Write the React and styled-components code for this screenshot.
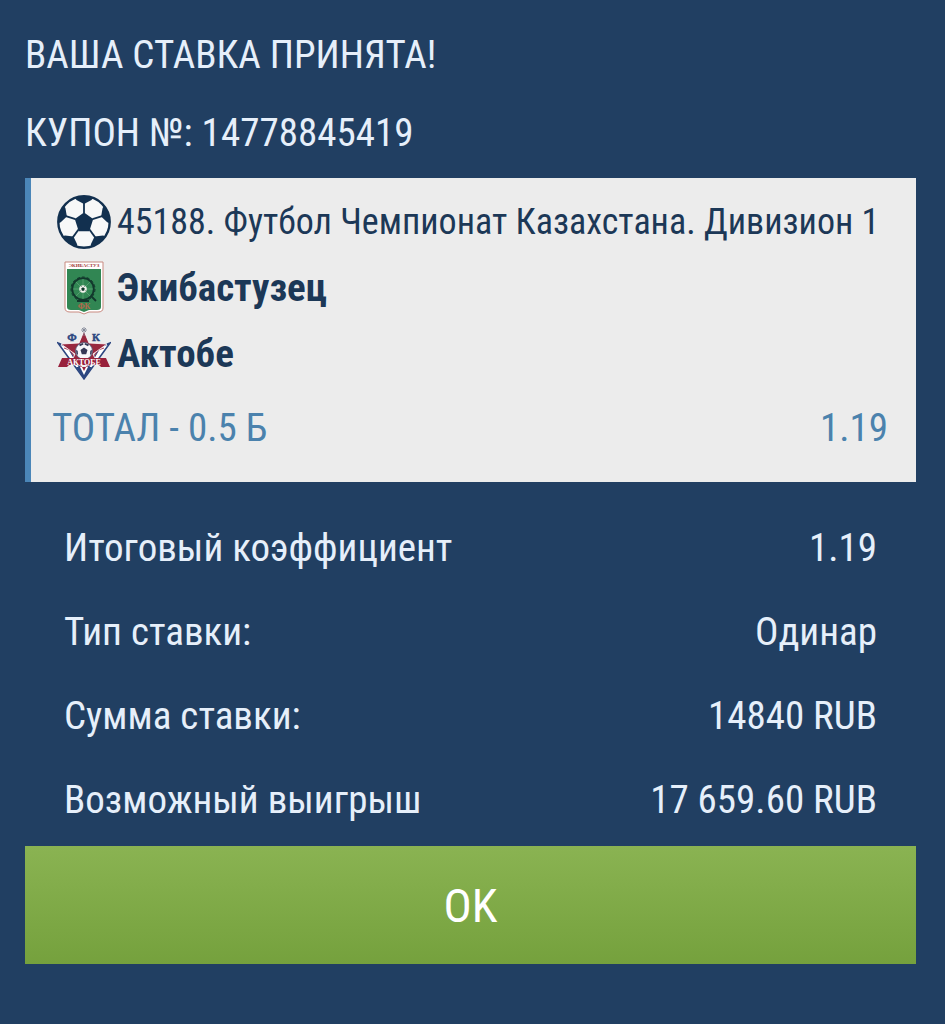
import React from 'react';
import styled, { createGlobalStyle } from 'styled-components';

const teams = [
  { name: 'Экибастузец', logo: 'ekibastuzets' },
  { name: 'Актобе', logo: 'aktobe' },
];

const summary = [
  { label: 'Итоговый коэффициент', value: '1.19' },
  { label: 'Тип ставки:', value: 'Одинар' },
  { label: 'Сумма ставки:', value: '14840 RUB' },
  { label: 'Возможный выигрыш', value: '17 659.60 RUB' },
];

const BallIcon = () => (
  <Icon viewBox="0 0 54 54" aria-hidden="true">
    <circle cx="27" cy="27" r="25.7" fill="#f7f8f8" stroke="#12304f" strokeWidth="2.4" />
    <path d="M27 17.5l9.2 6.600-3.500 10.800-.3 1.300H21.600l-.3-1.300-3.500-10.800z" fill="#12304f" />
    {[0, 72, 144, 216, 288].map((angle) => (
      <g key={angle} transform={`rotate(${angle} 27 27)`}>
        <path d="M27 18V8" stroke="#12304f" strokeWidth="1.8" />
        <path d="M18 3Q27 0 36 3l-1.500 2L27 9l-7.500-4z" fill="#12304f" />
      </g>
    ))}
  </Icon>
);

const EkibastuzetsLogo = () => (
  <Icon viewBox="0 0 54 54" aria-hidden="true">
    <path d="M8 1h38v46q0 4-5 4h-9l-5 2-5-2h-9q-5 0-5-4z" fill="#fff" stroke="#c98a80" />
    <path d="M10 8h34v38q0 3-4 3h-8l-5 2-5-2h-8q-4 0-4-3z" fill="#318653" />
    <ClubText x="27" y="6" fontSize="5" fill="#a33a36">ЭКИБАСТУЗ</ClubText>
    <path d="M26 17v22M15 28h22M19 21l14 14M33 21L19 35" stroke="#79b58b" strokeWidth=".5" />
    <circle cx="26" cy="28" r="10.8" fill="none" stroke="#12372c" strokeWidth="1.8" />
    <circle cx="26" cy="28" r="12" fill="none" stroke="#12372c" strokeWidth="1" strokeDasharray="3 2" />
    <path d="M20 40h12M34 35l5 5" stroke="#12372c" strokeWidth="1.8" />
    <circle cx="26" cy="28" r="3.8" fill="#f1f3ec" />
    <path d="M26 26.200l1.800 1.300-.7 2.200h-2.200l-.7-2.200zM23.300 25.500l1.200-.8.500.8zM28.700 25.500l-1.200-.8-.5.8zM22.500 29l1 .5.2 1.300zM29.500 29l-1 .5-.2 1.300z" fill="#12372c" />
    <ClubText x="27" y="48" fontSize="8" fill="#b5674b">ФК</ClubText>
  </Icon>
);

const AktobeLogo = () => (
  <Icon viewBox="0 0 54 54" aria-hidden="true">
    <path d="M1 16l10 4 16 28 16-28 10-4-26 36z" fill="#fff" stroke="#2c4680" strokeWidth="1.6" />
    <path d="M7 21l6 2 14 21 14-21 6-2" fill="none" stroke="#b04a5e" strokeWidth="1.2" />
    <path d="M27 4l5 12 18 1-14 10 5 11H13l5-11L4 17l18-1z" fill="#98283f" stroke="#fff" strokeWidth=".8" />
    <path d="M27 0v9M24 3h6M25 1l4 4M29 1l-4 4" stroke="#818796" strokeWidth=".9" />
    <circle cx="27" cy="24" r="8.500" fill="#f6f6fa" stroke="#4b506f" strokeWidth=".8" />
    <path d="M27 20.500l3.500 2.600-1.300 4.200h-4.400l-1.300-4.200zM22 17.500l4-1.500.5 1.500-3.500 1.700zM32 17.500L28 16l-.5 1.500 3.500 1.700zM19 23l1.700.8.3 4-1.500-.5zM35 23l-1.700.8-.3 4 1.500-.5z" fill="#343857" />
    <path d="M5 31h44l4 9h-9l-2-2H12l-2 2H1z" fill="#98213c" />
    <ClubText x="27" y="38" fontSize="8" fill="#fff">АКТОБЕ</ClubText>
    <ClubText x="15" y="14" fontSize="11" fill="#2c4680" stroke="#2c4680" strokeWidth=".4">Ф</ClubText>
    <ClubText x="39" y="14" fontSize="11" fill="#2c4680" stroke="#2c4680" strokeWidth=".4">К</ClubText>
    <path d="M19 40h16l-8 12z" fill="#2c4680" />
    <path d="M23 40h8l-4 8z" fill="#fff" />
    <path d="M25 40h4l-2 4z" fill="#98213c" />
  </Icon>
);

const logos = {
  ekibastuzets: EkibastuzetsLogo,
  aktobe: AktobeLogo,
};

const App = () => {
  return (
    <>
      <GlobalStyle />
      <Container>
        <Title>ВАША СТАВКА ПРИНЯТА!</Title>
        <Title as="h2">КУПОН №: 14778845419</Title>

        <Coupon>
          <EventRow>
            <BallIcon />
            <EventName>45188. Футбол Чемпионат Казахстана. Дивизион 1</EventName>
          </EventRow>
          {teams.map((team) => {
            const Logo = logos[team.logo];
            return (
              <EventRow key={team.name}>
                <Logo />
                <TeamName>{team.name}</TeamName>
              </EventRow>
            );
          })}
          <Outcome>
            <span>ТОТАЛ - 0.5 Б</span>
            <span>1.19</span>
          </Outcome>
        </Coupon>

        <Summary>
          {summary.map((item) => (
            <SummaryRow key={item.label}>
              <dt>{item.label}</dt>
              <Value>{item.value}</Value>
            </SummaryRow>
          ))}
        </Summary>

        <Button type="button">OK</Button>
      </Container>
    </>
  );
};

const GlobalStyle = createGlobalStyle`
  * {
    box-sizing: border-box;
  }

  body {
    margin: 0;
    background-color: #213f62;
    font-family: 'Roboto Condensed', 'Liberation Sans Narrow', Roboto, sans-serif;
  }
`;

const Container = styled.main`
  display: flex;
  flex-direction: column;
  min-height: 100vh;
  padding: 16px 29px 60px 25px;
  color: #e6effa;
  font-size: 39px;
`;

const Title = styled.h1`
  margin: 0;
  font-size: 39px;
  font-weight: 400;
  line-height: 78px;
`;

const Coupon = styled.section`
  margin-top: 6px;
  padding: 11px 28px 13px 21px;
  background-color: #ececec;
  border-left: 6px solid #4b86b8;
  color: #1c3857;
`;

const EventRow = styled.div`
  display: flex;
  align-items: center;
  gap: 6px;
  min-height: 66px;
  padding-left: 5px;
`;

const Icon = styled.svg`
  flex: none;
  width: 54px;
  height: 54px;
`;

const ClubText = styled.text`
  font-family: 'Liberation Serif', serif;
  font-weight: 700;
  text-anchor: middle;
`;

const EventName = styled.span`
  font-size: 36px;
`;

const TeamName = styled.strong`
  font-size: 39px;
  font-weight: 700;
`;

const Outcome = styled.div`
  display: flex;
  justify-content: space-between;
  color: #4b82ad;
  line-height: 82px;
`;

const Summary = styled.dl`
  margin: 24px 0 4px;
  padding: 0 39px;
`;

const SummaryRow = styled.div`
  display: flex;
  justify-content: space-between;
  line-height: 84px;
`;

const Value = styled.dd`
  margin: 0;
`;

const Button = styled.button`
  height: 118px;
  padding: 0;
  border: none;
  background: linear-gradient(#8ab352, #75a13d);
  color: white;
  font-family: inherit;
  font-size: 47px;
  cursor: pointer;
`;

export default App;
